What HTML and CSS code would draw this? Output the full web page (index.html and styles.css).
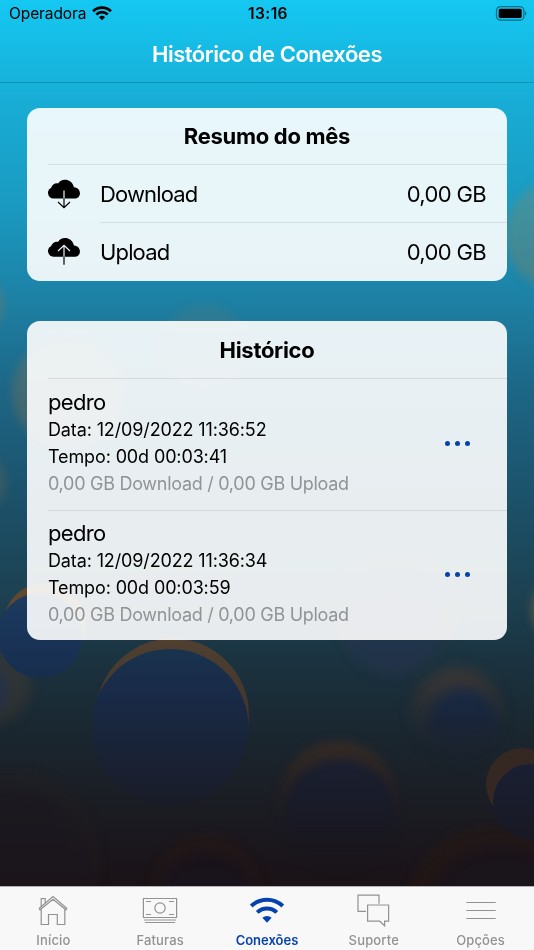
FILE: index.html
```html
<!DOCTYPE html>
<html lang="pt-BR">
<head>
    <meta charset="UTF-8">
    <meta name="viewport" content="width=device-width, initial-scale=1.0">
    <title>Histórico de Conexões</title>
    <link rel="stylesheet" href="styles.css">
</head>
<body>
    <!-- Background bubbles -->
    <svg class="bubbles" viewBox="0 0 534 950">
        <defs>
            <filter id="soft" x="-30%" y="-30%" width="160%" height="160%" color-interpolation-filters="sRGB"><feGaussianBlur stdDeviation="4"/></filter>
            <filter id="softer" x="-40%" y="-40%" width="180%" height="180%" color-interpolation-filters="sRGB"><feGaussianBlur stdDeviation="7"/></filter>
            <linearGradient id="blueLeft" x2="0" y2="1"><stop stop-color="#1c3b60"/><stop offset="1" stop-color="#172d4e"/></linearGradient>
            <linearGradient id="blue" x2="0" y2="1"><stop stop-color="#19334f"/><stop offset=".25" stop-color="#192b49"/><stop offset=".6" stop-color="#192438"/><stop offset="1" stop-color="#1a1b27"/></linearGradient>
            <linearGradient id="brown" x2="0" y2="1"><stop stop-color="#4f4030"/><stop offset=".5" stop-color="#41342b"/><stop offset="1" stop-color="#302820"/></linearGradient>
            <linearGradient id="blueRight" x2="0" y2="1"><stop stop-color="#192033"/><stop offset="1" stop-color="#191824"/></linearGradient>
            <linearGradient id="ringFade" x2="0" y2="1"><stop stop-color="#352b26"/><stop offset=".5" stop-color="#291f20" stop-opacity=".6"/><stop offset=".8" stop-color="#201a20" stop-opacity="0"/></linearGradient>
            <linearGradient id="nightFade" x2="0" y2="1"><stop stop-color="#1a2031"/><stop offset=".5" stop-color="#191a26"/><stop offset="1" stop-color="#19151b" stop-opacity="0"/></linearGradient>
            <linearGradient id="duskRing" x2="0" y2="1"><stop stop-color="#463a33"/><stop offset="1" stop-color="#2c2a2c" stop-opacity="0"/></linearGradient>
            <linearGradient id="duskBlue" x2="0" y2="1"><stop stop-color="#192a48"/><stop offset=".5" stop-color="#192437"/><stop offset="1" stop-color="#1a212c" stop-opacity=".3"/></linearGradient>
        </defs>
        <g filter="url(#soft)" fill="#b37a3c">
            <circle cx="560" cy="235" r="55" opacity=".25"/>
            <circle cx="-28" cy="305" r="32" opacity=".25"/>
            <circle cx="68" cy="392" r="56" opacity=".24"/>
            <circle cx="-28" cy="482" r="34" opacity=".18"/>
            <circle cx="205" cy="348" r="44" opacity=".1"/>
            <circle cx="568" cy="610" r="37" opacity=".35"/>
            <circle cx="395" cy="612" r="66" opacity=".02"/>
        </g>
        <circle cx="393" cy="627" r="48" fill="#2a3262" opacity=".3" filter="url(#softer)"/>
        <circle cx="-8" cy="686" r="38" fill="#6b4628" opacity=".28" filter="url(#softer)"/>
        <circle cx="-18" cy="692" r="26" fill="#18305a" opacity=".6" filter="url(#softer)"/>

        <circle cx="44.500" cy="624" r="41" fill="#60482e"/>
        <circle cx="40" cy="635.500" r="42.500" fill="url(#blueLeft)"/>
        <circle cx="172.500" cy="715" r="76.500" fill="url(#brown)"/>
        <circle cx="170" cy="727.500" r="78.500" fill="url(#blue)"/>

        <circle cx="457" cy="714" r="46" fill="url(#duskRing)" opacity=".85" filter="url(#softer)"/>
        <circle cx="463" cy="725" r="36" fill="url(#duskBlue)" filter="url(#softer)"/>
        <circle cx="338" cy="801" r="60" fill="url(#ringFade)" filter="url(#soft)"/>
        <circle cx="340" cy="817" r="57" fill="url(#nightFade)" filter="url(#soft)"/>
        <circle cx="490" cy="911" r="84" fill="#2a1a14" opacity=".5" filter="url(#soft)"/>
        <circle cx="502" cy="926" r="80" fill="#1a141b" filter="url(#softer)"/>
        <circle cx="206" cy="890" r="56" fill="#2a1a14" opacity=".45" filter="url(#soft)"/>
        <circle cx="207" cy="907" r="54" fill="#19131b" filter="url(#softer)"/>
        <circle cx="10" cy="860" r="92" fill="#2a231f" opacity=".22" filter="url(#soft)"/>
        <circle cx="8" cy="874" r="86" fill="#1a161f" opacity=".5" filter="url(#softer)"/>
        <circle cx="522.500" cy="784.500" r="36.500" fill="#352823"/>
        <circle cx="530.500" cy="801.500" r="37.500" fill="url(#blueRight)"/>
    </svg>

    <header>
        <div class="status-bar">
            <div class="carrier">
                <span>Operadora</span>
                <svg width="20" height="15" viewBox="0 0 34 25" fill="none" stroke="#000" stroke-width="4.600">
                    <path d="M1.800 8.800C10.200.4 23.800.4 32.200 8.800"/>
                    <path d="M7.300 14.300C12.700 9 21.300 9 26.700 14.300"/>
                    <path d="M11.800 18.700Q17 14.300 22.200 18.700L17 24Z" fill="#000" stroke="none"/>
                </svg>
            </div>
            <div class="clock">13:16</div>
            <div class="battery">
                <svg width="32" height="16" viewBox="0 0 32 16">
                    <rect x="1.500" y=".6" width="27.400" height="13.600" rx="4" fill="none" stroke="#000" stroke-opacity=".45" stroke-width="1.200"/>
                    <rect x="3.700" y="2.800" width="23" height="9.200" rx="1.500" fill="#000"/>
                    <path d="M30.200 5Q32.600 7.400 30.200 9.800Z" fill="#000" fill-opacity=".5"/>
                </svg>
            </div>
        </div>
        <h1>Histórico de Conexões</h1>
    </header>

    <main>
        <section class="card">
            <h2>Resumo do mês</h2>
            <div class="summary-row">
                <svg class="cloud" width="32" height="32" viewBox="0 0 32 32">
                    <path d="M5.500 20.500A5.700 5.700 0 0 1 3.200 9.700C4 7 7 4.800 10.200 5.500C12.500 .2 23.500-.5 26 9.200C34 9.800 33.500 20.500 27 20.500Z"/>
                    <path d="M16 12.500v8" stroke="#e9f4f8" stroke-width="1.200"/>
                    <path d="M16 20.500v9M10 24l6 5.700 6-5.700" fill="none" stroke="#000" stroke-width="1.200"/>
                </svg>
                <div class="summary-text">
                    <span>Download</span>
                    <span class="amount">0,00 GB</span>
                </div>
            </div>
            <div class="summary-row">
                <svg class="cloud" width="32" height="32" viewBox="0 0 32 32">
                    <path d="M5.500 20.800A5.700 5.700 0 0 1 3.200 10C4 7.300 7 5.100 10.200 5.800C12.500 .5 23.500-.2 26 9.500C34 10.100 33.500 20.800 27 20.800Z"/>
                    <path d="M16 20.800V9.500M10 15l6-5.700 6 5.700" fill="none" stroke="#e9f4f8" stroke-width="1.200"/>
                    <path d="M16 20.800v8" stroke="#000" stroke-width="1.200"/>
                </svg>
                <div class="summary-text">
                    <span>Upload</span>
                    <span class="amount">0,00 GB</span>
                </div>
            </div>
        </section>

        <section class="card history">
            <h2>Histórico</h2>
            <div class="entry">
                <div class="entry-info">
                    <p class="user">pedro</p>
                    <p>Data: 12/09/2022 11:36:52</p>
                    <p>Tempo: 00d 00:03:41</p>
                    <p class="traffic">0,00 GB Download / 0,00 GB Upload</p>
                </div>
                <div class="more"><i></i><i></i><i></i></div>
            </div>
            <div class="entry">
                <div class="entry-info">
                    <p class="user">pedro</p>
                    <p>Data: 12/09/2022 11:36:34</p>
                    <p>Tempo: 00d 00:03:59</p>
                    <p class="traffic">0,00 GB Download / 0,00 GB Upload</p>
                </div>
                <div class="more"><i></i><i></i><i></i></div>
            </div>
        </section>
    </main>

    <nav>
        <a class="tab">
            <svg viewBox="0 0 36 36">
                <path d="M4 15.500L18 3.500l14 12M4 15.500l1 1.300L18 6.200l13 10.600 1-1.300M6.200 13.500V5.600h4v4.500M6.200 16v15.500h7.300V21.500h8.800v10h7.500V16"/>
            </svg>
            <span>Início</span>
        </a>
        <a class="tab">
            <svg viewBox="0 0 36 36">
                <path d="M1.400 5.500h33.200v19H1.400zM4 8.500h5M27 8.500h5M4 21.500h5M27 21.500h5M2 27h32M3 29.500h30"/>
                <circle cx="18" cy="15" r="5.200"/>
            </svg>
            <span>Faturas</span>
        </a>
        <a class="tab active">
            <svg viewBox="0 0 36 36">
                <path d="M2.200 13C11 4.500 25 4.500 33.800 13" stroke-width="4"/>
                <path d="M8.200 19.400C13.800 14.200 22.200 14.200 27.800 19.400" stroke-width="4"/>
                <path d="M13.300 24.800Q18 21 22.700 24.800L18 29.700Z" fill="#0442af" stroke="none"/>
            </svg>
            <span>Conexões</span>
        </a>
        <a class="tab">
            <svg viewBox="0 0 36 36">
                <path d="M10 18.400H2V2.200h21v8.600M11.600 12h21v16.200h-4v4.600l-4.800-4.600H11.600z"/>
            </svg>
            <span>Suporte</span>
        </a>
        <a class="tab">
            <svg viewBox="0 0 36 36">
                <path d="M3.300 9.500h29.400M3.300 17.500h29.400M3.300 25.500h29.400"/>
            </svg>
            <span>Opções</span>
        </a>
    </nav>
</body>
</html>
```
FILE: styles.css
```css
* {
    box-sizing: border-box;
}
body {
    position: relative;
    margin: 0;
    height: 950px;
    display: flex;
    flex-direction: column;
    overflow: hidden;
    font-family: Inter, "Liberation Sans", sans-serif;
    color: #000;
    background: linear-gradient(#14c8f2 0, #18add6 100px, #1a9bc2 200px, #1d82a6 295px, #1d6686 390px, #1c536c 490px, #1c4050 600px, #1b3340 660px, #1a2730 730px, #1b1d24 800px, #1a1217 886px);
}
h1, h2, p {
    margin: 0;
}
/* Decorative layer behind the content */
.bubbles {
    position: absolute;
    top: 0;
    left: 0;
    width: 534px;
    height: 950px;
    z-index: -1;
}
header {
    height: 83px;
    border-bottom: 1px solid rgba(0, 60, 80, 0.25);
}
.status-bar {
    display: grid;
    grid-template-columns: 1fr auto 1fr;
    align-items: center;
    height: 27px;
    padding: 0 7px 0 9px;
    font-size: 15.500px;
}
.carrier {
    display: flex;
    align-items: center;
    gap: 6px;
    letter-spacing: -0.1px;
}
.clock {
    font-weight: 600;
    letter-spacing: 0.4px;
}
.battery {
    display: flex;
    justify-content: flex-end;
}
h1 {
    font-size: 22px;
    font-weight: 600;
    letter-spacing: -0.48px;
    line-height: 54px;
    text-align: center;
    color: #fff;
}
main {
    flex: 1;
    display: flex;
    flex-direction: column;
    gap: 40px;
    padding: 25px 27px 0;
}
.card {
    border-radius: 13px;
    background: rgba(255, 255, 255, 0.9);
    padding-left: 21px;
}
h2 {
    height: 57px;
    padding-right: 21px;
    font-size: 22px;
    font-weight: 700;
    letter-spacing: -0.3px;
    line-height: 57px;
    text-align: center;
    border-bottom: 1px solid rgba(60, 60, 70, 0.12);
}
.history h2 {
    height: 58px;
    line-height: 59px;
}
.summary-row {
    display: flex;
    align-items: center;
    gap: 20px;
    height: 58px;
}
.summary-text {
    flex: 1;
    display: flex;
    justify-content: space-between;
    height: 58px;
    padding-right: 21px;
    font-size: 22px;
    letter-spacing: -0.85px;
    line-height: 58px;
}
.amount {
    letter-spacing: -0.65px;
}
.summary-row:nth-child(2) .summary-text {
    border-bottom: 1px solid rgba(60, 60, 70, 0.12);
}
.entry {
    display: flex;
    align-items: center;
    justify-content: space-between;
    height: 130.500px;
    padding: 0 37px 1px 0;
}
.entry + .entry {
    border-top: 1px solid rgba(60, 60, 70, 0.12);
}
.entry-info {
    padding-bottom: 2px;
    font-size: 18px;
    letter-spacing: -0.13px;
    line-height: 27px;
    white-space: nowrap;
}
.user {
    font-size: 22px;
    letter-spacing: -0.7px;
}
.traffic {
    color: #919496;
    letter-spacing: -0.28px;
}
.more {
    display: flex;
    gap: 5px;
}
.more i {
    width: 5px;
    height: 5px;
    border-radius: 50%;
    background: #0442af;
}
nav {
    display: flex;
    height: 64px;
    padding-top: 6px;
    background: #f8f8f8;
    border-top: 1px solid #b5b3b5;
}
.tab {
    flex: 1;
    display: flex;
    flex-direction: column;
    align-items: center;
    gap: 2px;
    font-size: 13px;
    font-weight: 500;
    letter-spacing: 0.15px;
    line-height: 18px;
    color: #929292;
}
.tab svg {
    width: 36px;
    height: 36px;
    fill: none;
    stroke: #929292;
    stroke-width: 1.200;
}
.tab.active {
    color: #0442af;
    font-weight: 600;
    letter-spacing: 0;
}
.tab.active svg {
    stroke: #0442af;
}
```
